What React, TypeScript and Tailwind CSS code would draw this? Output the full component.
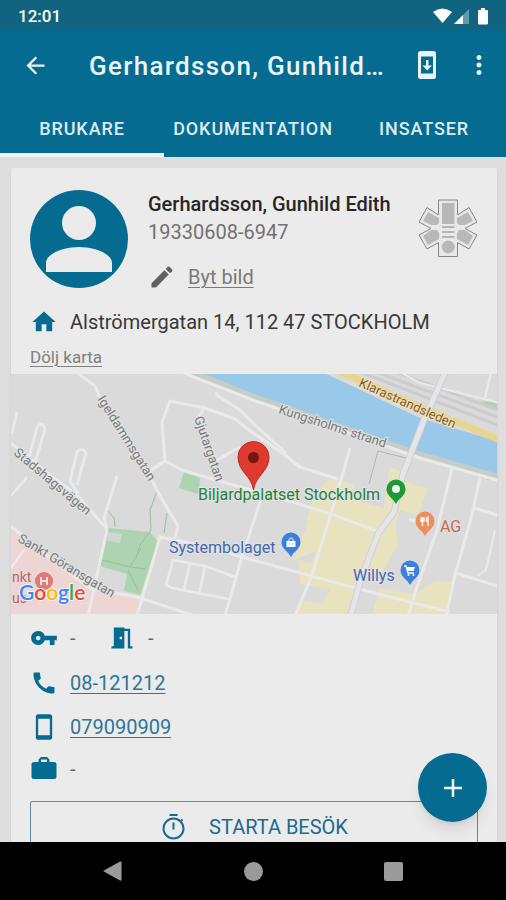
import type { ReactNode } from "react";
import {
  MdArrowBack,
  MdCall,
  MdEdit,
  MdHome,
  MdMeetingRoom,
  MdMoreVert,
  MdStayCurrentPortrait,
  MdVpnKey,
} from "react-icons/md";

function StatusBar() {
  return (
    <div className="flex h-[30px] items-center justify-between bg-[#10647f] pt-px pr-4 pl-[18px] text-white">
      <span className="text-[17px] leading-5 font-medium">12:01</span>
      <svg className="h-5 w-[58px]" viewBox="0 0 58 20" aria-hidden="true">
        <path d="M1 6 Q10.500 -1 20 6 L10.500 17 Z" fill="#fff" />
        <path d="M37 3 V18 H22 Z" fill="#fff" fillOpacity="0.35" />
        <path d="M31 9 V18 H22 Z" fill="#fff" />
        <path d="M49 2 H53 V4 H55 Q56 4 56 5 V17 Q56 18.500 55 18.500 H47 Q46 18.500 46 17 V5 Q46 4 47 4 H49 Z" fill="#fff" />
      </svg>
    </div>
  );
}

function Toolbar() {
  return (
    <div className="flex h-[70px] items-center pr-3 pl-[22px] text-[#eaf3f6]">
      <button type="button" aria-label="Tillbaka" className="mr-10">
        <MdArrowBack className="size-[27px]" />
      </button>
      <h1 className="min-w-0 flex-1 truncate pt-0.5 text-[26px] leading-8 font-medium tracking-wider">
        Gerhardsson, Gunhild…
      </h1>
      <button type="button" aria-label="Ladda ner" className="mr-7">
        <svg className="h-7 w-[18px]" viewBox="0 0 18 28">
          <path
            fillRule="evenodd"
            fill="currentColor"
            d="M2.500 0 H15.500 Q18 0 18 2.500 V25.500 Q18 28 15.500 28 H2.500 Q0 28 0 25.500 V2.500 Q0 0 2.500 0 Z M3 5.500 V22.500 H15 V5.500 Z"
          />
          <path fill="currentColor" d="M8 9 H10.500 V14.500 H14 L9.200 19.500 L4.500 14.500 H8 Z" />
        </svg>
      </button>
      <button type="button" aria-label="Fler val">
        <MdMoreVert className="size-[30px]" />
      </button>
    </div>
  );
}

function Tabs() {
  return (
    <nav className="flex h-[57px] text-[18px] leading-6 font-medium tracking-wider text-[#dcebf1]">
      <a href="#brukare" aria-current="page" className="flex w-[164px] items-center justify-center border-b-4 border-[#f0f2f3] pt-[5px]">
        BRUKARE
      </a>
      <a href="#dokumentation" className="flex flex-1 items-center justify-center pt-px">
        DOKUMENTATION
      </a>
      <a href="#insatser" className="flex w-[164px] items-center justify-center pt-px">
        INSATSER
      </a>
    </nav>
  );
}

function Avatar() {
  return (
    <svg className="size-[98px] shrink-0" viewBox="0 0 98 98" role="img" aria-label="Profilbild">
      <circle cx="49" cy="49" r="49" fill="#056b90" />
      <circle cx="49" cy="33" r="17" fill="#ebebeb" />
      <path d="M16 82 V72 C18 62 36 57 49 57 C62 57 80 62 82 72 V82 Z" fill="#ebebeb" />
    </svg>
  );
}

function StarOfLife() {
  return (
    <svg className="h-[60px] w-[60px] shrink-0" viewBox="0 0 60 60" role="img" aria-label="Medicinsk information">
      <path
        d="M20.500 2 H39.500 V17 L51 9.500 L59 24 L47 30.500 L59 37 L51 51 L39.500 44.500 V58.500 H20.500 V44.500 L9 51 L1 37 L13 30.500 L1 24 L9 9.500 L20.500 17 Z"
        fill="#e8e8e8"
        stroke="#858585"
        strokeWidth="1"
      />
      <g fill="#b8b8b8">
        <path d="M24 5 H36.500 V26 H24 Z" />
        <path d="M10 14 L21 20 Q22 25 19 27 L13 27 L5 23 Z" />
        <path d="M50 14 L39 20 Q38 25 41 27 L47 27 L55 23 Z" />
        <path d="M10 47 L21 41 Q22 35 19 32 L13 32 L5 38 Z" />
        <path d="M50 47 L39 41 Q38 35 41 32 L47 32 L55 38 Z" />
        <circle cx="30.200" cy="49" r="6.500" />
      </g>
      <path d="M24 29 H36.500 M24 34 H36.500 M24 39 H36.500" stroke="#b5b5b5" strokeWidth="2" />
    </svg>
  );
}

function Pin({ x, y, color, children }: { x: number; y: number; color: string; children?: ReactNode }) {
  return (
    <g transform={`translate(${x} ${y})`}>
      <path d="M0 14 C-3 8 -9.500 6 -9.500 -1 A9.500 9.500 0 0 1 9.500 -1 C9.500 6 3 8 0 14 Z" fill={color} />
      {children}
    </g>
  );
}

function StreetMap() {
  return (
    <svg
      className="block h-60 w-full"
      viewBox="11 374 486 240"
      preserveAspectRatio="xMidYMid slice"
      role="img"
      aria-label="Karta över Alströmergatan 14"
    >
      <rect x="0" y="360" width="520" height="270" fill="#dadada" />
      <path d="M0 516 L60 562 L92 590 L140 598 L139 620 H0 Z" fill="#ecd5d4" />
      <g fill="#aed3b0">
        <path d="M108 528 L150 532 L158 542 L140 595 L124 591 L127 574 L100 566 Z" />
        <path d="M184 472 L200 478 L198 494 L179 488 Z" />
        <path d="M472 402 L497 401 V411 Z" />
        <path d="M490 473 L497 475 V480 H486 Z" />
      </g>
      <path d="M108 532 L122 534 L120 543 L107 541 Z" fill="#d0d6d0" />
      <g fill="#e8e2bf">
        <path d="M390 467 L404 472 L402 480 L428 489 L418 515 L398 510 L395 528 L397 545 L384 570 L355 583 L310 572 L315 552 L293 560 L305 530 L313 495 L330 479 L354 484 L350 498 L384 508 Z" />
        <path d="M298 560 L322 565 L356 582 L352 614 H296 L300 600 L322 604 L330 590 L300 584 Z" />
        <path d="M380 588 L415 594 L436 580 L452 582 L445 614 H372 Z" />
        <path d="M387 505 L400 508 L396 525 L398 545 L384 568 L365 564 Z" />
      </g>
      <path d="M192 372 L322 372 L420 418 L500 442 V475 L420 452 L253 396 Z" fill="#9ac8e9" />
      <path d="M180 368 L253 397 L420 455 L500 478" fill="none" stroke="#c6ccc6" strokeWidth="7" />
      <g fill="none" stroke="#cccccf" strokeWidth="3">
        <path d="M360 372 L500 426" />
        <path d="M376 372 L500 418" />
        <path d="M396 372 L500 411" />
      </g>
      <g fill="none" stroke="#9dbda2" strokeWidth="1">
        <path d="M157 491 L150 510 L151 530 L140 545 L136 558" />
        <path d="M107 510 L114 518 L115 527" />
        <path d="M167 513 L164 533" />
        <path d="M102 560 L130 567 L146 569 M130 567 L141 548 M128 570 L138 590" />
        <path d="M378 451 L369 484 M378 451 L410 459" stroke="#b3b9b3" />
      </g>
      <g fill="none" stroke="#eaeaea" strokeWidth="3" strokeLinejoin="round">
        <path d="M176 370 L253 400 L420 458 L500 481" />
        <path d="M76 372 L95 386 L103 405 L150 476 L160 496 L178 526 L175 538" />
        <path d="M148 472 L165 461 L162 422 L170 401 L205 408 L235 419 L253 433 L285 455 L300 467 L338 479" />
        <path d="M165 461 L182 470 L240 487 L264 494" />
        <path d="M215 476 L217 460 L240 447" />
        <path d="M216 392 L218 396 L240 410 L256 426 L286 453" />
        <path d="M205 406 L198 418" />
        <path d="M29 458 L37 427 Q42 420 45 429 L35 463" />
        <path d="M78 493 L70 481 L77 452 Q82 446 86 453 L77 485" />
        <path d="M11 443 L46 472 L78 496 L106 528" />
        <path d="M12 434 L17 412 M11 496 L27 477" strokeWidth="2.500" />
        <path d="M117 476 L104 518 L107 530 L88 616" />
        <path d="M8 524 L50 558 L90 588 L137 597 L192 615" />
        <path d="M11 568 L24 550" strokeWidth="2.500" />
        <path d="M137 616 L160 537 L200 545 L253 560 L355 588 L450 612" />
        <path d="M225 616 L241 560 L264 490" />
        <path d="M235 577 L205 566 L173 560 L166 585 L172 588 L228 599 M190 563 L184 589 M205 567 L199 594" strokeWidth="2.500" />
        <path d="M350 448 L341 480 L331 513 L312 575 L295 616" />
        <path d="M283 499 L331 514 L380 532" />
        <path d="M452 468 L437 530 L416 590 L408 616" />
        <path d="M480 478 L472 515 L455 575 L446 616" />
        <path d="M474 508 L500 516 M456 573 L500 587 M409 519 L430 526" />
        <path d="M495 530 L486 570 L477 576" strokeWidth="2" />
        <path d="M491 372 L485 398 M400 372 L420 383 L500 403" strokeWidth="2" />
      </g>
      <path d="M332 368 L420 407 L500 440" fill="none" stroke="#e8d590" strokeWidth="7" />
      <g fill="none" strokeLinejoin="round">
        <path d="M447 368 L424 420 L403 474 L394 512 L378 534 L360 582 L350 618" stroke="#cfcfd4" strokeWidth="7" />
        <path d="M447 368 L424 420 L403 474 L394 512 L378 534 L360 582 L350 618" stroke="#e5e5e8" strokeWidth="5" />
      </g>

      <g fill="#77797b" fontSize="13" stroke="#e2e2e2" strokeWidth="2" paintOrder="stroke">
        <text transform="translate(97 399) rotate(58)">Igeldammsgatan</text>
        <text transform="translate(194 418) rotate(71)">Gjutargatan</text>
        <text transform="translate(278 413) rotate(18)">Kungsholms strand</text>
        <text transform="translate(13 454) rotate(40)">Stadshagsvägen</text>
        <text transform="translate(17 541) rotate(31)">Sankt Göransgatan</text>
      </g>
      <text transform="translate(358 386) rotate(24)" fill="#82582f" fontSize="13" stroke="#f0e4b8" strokeWidth="2" paintOrder="stroke">
        Klarastrandsleden
      </text>
      <g fontSize="16" stroke="#e2e2e2" strokeWidth="2" paintOrder="stroke">
        <text x="198" y="500" fill="#24803a">Biljardpalatset Stockholm</text>
        <text x="169" y="553" fill="#4367ab">Systembolaget</text>
        <text x="353" y="581" fill="#4367ab">Willys</text>
        <text x="440" y="532" fill="#c4694a">AG</text>
      </g>
      <g fontSize="14" fill="#b8686b" stroke="#ecd5d4" strokeWidth="1" paintOrder="stroke">
        <text x="12" y="582">nkt</text>
        <text x="12" y="603">us</text>
      </g>

      <circle cx="44" cy="581" r="9" fill="#dd7b7c" />
      <path d="M41 577 V585 M47 577 V585 M41 581 H47" stroke="#f4dede" strokeWidth="2" />
      <Pin x={396} y={490} color="#1e9a33">
        <circle cx="0" cy="-1" r="4" fill="#f2f2f2" />
      </Pin>
      <Pin x={425} y={522} color="#ed8e5c">
        <path d="M-4 -5 V-1 H-1 V-5 M-2.500 -5 V4 M3 4 V-5 Q0 -3 2 0" fill="none" stroke="#fff" strokeWidth="1.300" />
      </Pin>
      <Pin x={291} y={543} color="#3d80dc">
        <path d="M-4.500 -2 H4.500 V4 H-4.500 Z" fill="#fff" />
        <path d="M-2.500 -2 Q0 -8 2.500 -2 M-1.500 0 V2 M1.500 0 V2" fill="none" stroke="#bcd4f5" strokeWidth="1.300" />
      </Pin>
      <Pin x={410} y={571} color="#3d80dc">
        <path d="M-6 -5 H-4 L-2 2 H4" fill="none" stroke="#fff" strokeWidth="1.300" />
        <path d="M-4 -4 H5 L3.500 0 H-2.500 Z" fill="#fff" />
        <circle cx="-1.500" cy="4" r="1" fill="#fff" />
        <circle cx="3.500" cy="4" r="1" fill="#fff" />
      </Pin>
      <path
        d="M253.500 490 C252 476 238 472 238 457 A15.500 15.500 0 0 1 269 457 C269 472 255 476 253.500 490 Z"
        fill="#de3a30"
        stroke="#b92d26"
        strokeWidth="1"
      />
      <circle cx="253.500" cy="457.500" r="5.500" fill="#77150f" />

      <text x="19" y="600" fontSize="21" fontWeight="600" stroke="#f1f1f1" strokeWidth="2" paintOrder="stroke" className="font-['Lato',sans-serif]">
        <tspan fill="#4285f4">G</tspan>
        <tspan fill="#ea4335">o</tspan>
        <tspan fill="#fbbc05">o</tspan>
        <tspan fill="#4285f4">g</tspan>
        <tspan fill="#34a853">l</tspan>
        <tspan fill="#ea4335">e</tspan>
      </text>
    </svg>
  );
}

function ClientHeader() {
  return (
    <section className="px-[19px] pt-[22px] pb-1">
      <div className="flex h-[98px]">
        <Avatar />
        <div className="ml-5 min-w-0 flex-1">
          <h2 className="truncate text-[20px] leading-7 font-medium text-[#262626]">Gerhardsson, Gunhild Edith</h2>
          <p className="text-[20px] leading-7 text-[#717171]">19330608-6947</p>
          <a href="#byt-bild" className="mt-[15px] flex items-center text-[20px] leading-8 text-[#7a7a7a]">
            <MdEdit className="mr-3 size-7 text-[#606060]" />
            <span className="underline decoration-1 underline-offset-3">Byt bild</span>
          </a>
        </div>
        <div className="pt-2">
          <StarOfLife />
        </div>
      </div>
      <div className="mt-5 flex items-center text-[20px] leading-7 text-[#383838]">
        <MdHome className="mr-3 size-7 text-[#056b90]" />
        Alströmergatan 14, 112 47 STOCKHOLM
      </div>
      <a href="#karta" className="mt-2 inline-block text-[17px] leading-[26px] text-[#808080] underline decoration-1 underline-offset-3">
        Dölj karta
      </a>
    </section>
  );
}

function Briefcase() {
  return (
    <svg className="mr-3 size-7 text-[#056b90]" viewBox="0 0 28 28" aria-hidden="true">
      <path
        fill="currentColor"
        fillRule="evenodd"
        d="M11 2 H17 L19.500 4.500 V7 H24 Q26.500 7 26.500 9.500 V21.500 Q26.500 24 24 24 H4 Q1.500 24 1.500 21.500 V9.500 Q1.500 7 4 7 H8.500 V4.500 Z M11 4.500 V7 H17 V4.500 Z"
      />
    </svg>
  );
}

function ContactDetails() {
  return (
    <section className="flex flex-col px-[19px] pt-2 text-[20px] text-[#686868]">
      <div className="flex h-8 items-center">
        <MdVpnKey className="mr-3 size-7 text-[#056b90]" />
        <span className="w-[38px]">-</span>
        <MdMeetingRoom className="mr-3 size-7 text-[#056b90]" />
        <span>-</span>
      </div>
      <div className="mt-[7px] flex h-11 items-center">
        <MdCall className="mr-3 size-7 text-[#056b90]" />
        <a href="tel:08121212" className="text-[#2d769a] underline decoration-1 underline-offset-3">08-121212</a>
      </div>
      <div className="flex h-11 items-center">
        <MdStayCurrentPortrait className="mr-3 size-7 text-[#056b90]" />
        <a href="tel:079090909" className="text-[#2d769a] underline decoration-1 underline-offset-3">079090909</a>
      </div>
      <div className="flex h-10 items-center">
        <Briefcase />
        <span>-</span>
      </div>
      <button
        type="button"
        className="mt-3 flex h-[52px] shrink-0 items-center justify-center gap-[22px] rounded-xs border border-[#5d87a2] text-[20px] font-normal text-[#1b6a90]"
      >
        <svg className="size-[27px]" viewBox="0 0 27 27" fill="none" stroke="currentColor" strokeWidth="2" aria-hidden="true">
          <circle cx="13.500" cy="14.500" r="10" />
          <path d="M9.500 1 H17.500 M13.500 8.500 V15.500 M20.500 7.500 L22.500 5.500" />
        </svg>
        STARTA BESÖK
      </button>
    </section>
  );
}

function SystemNavigation() {
  return (
    <nav className="grid h-[58px] shrink-0 grid-cols-3 place-items-center bg-black px-[43px] text-[#9a9a9a]">
      <button type="button" aria-label="Bakåt">
        <svg className="size-[22px]" viewBox="0 0 22 22" fill="currentColor">
          <path d="M1 11 L18 1.500 Q19.500 1 19.500 2.500 V19.500 Q19.500 21 18 20.500 Z" />
        </svg>
      </button>
      <button type="button" aria-label="Hem" className="size-[19px] rounded-full bg-[#9a9a9a]" />
      <button type="button" aria-label="Översikt" className="size-[19px] rounded-xs bg-[#9a9a9a]" />
    </nav>
  );
}

export default function App() {
  return (
    <div className="flex h-screen flex-col overflow-hidden bg-[#dedede] font-['Roboto',sans-serif]">
      <header className="shrink-0 bg-[#056b90]">
        <StatusBar />
        <Toolbar />
        <Tabs />
      </header>
      <main className="relative min-h-0 flex-1 overflow-hidden pt-[11px] pr-[9px] pl-[11px]">
        <article className="rounded-xs bg-[#ebebeb] shadow-sm">
          <ClientHeader />
          <StreetMap />
          <ContactDetails />
        </article>
        <button
          type="button"
          aria-label="Lägg till"
          className="absolute right-[19px] bottom-5 flex size-[69px] items-center justify-center rounded-full bg-[#056b90] shadow-lg"
        >
          <svg className="size-[18px]" viewBox="0 0 18 18" stroke="#eef4f6" strokeWidth="2.500">
            <path d="M9 0 V18 M0 9 H18" />
          </svg>
        </button>
      </main>
      <SystemNavigation />
    </div>
  );
}
